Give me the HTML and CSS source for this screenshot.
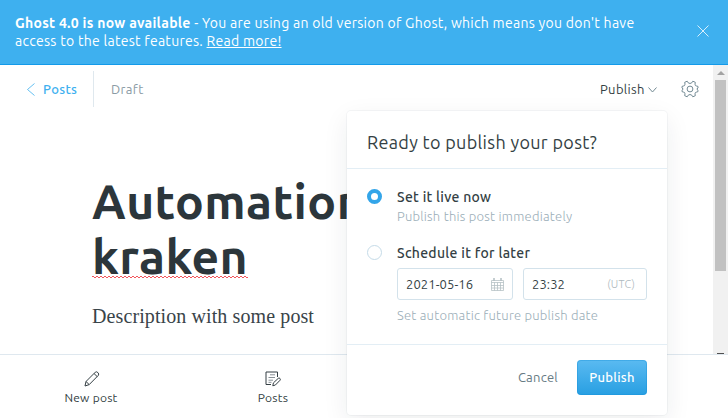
FILE: index.html
```html
<!DOCTYPE html>
<html lang="en">
<head>
<meta charset="utf-8">
<title>Ghost editor</title>
<link rel="stylesheet" href="styles.css">
</head>
<body>
<aside class="alert">
  <p class="alert-text"><strong>Ghost 4.0 is now available</strong> - You are using an old version of Ghost, which means you don't have<br>access to the latest features. <a>Read more!</a></p>
  <svg class="alert-close" viewBox="0 0 12 12"><path d="M.5.5l11 11M11.5.5l-11 11"/></svg>
</aside>
<main class="viewport">
  <section class="editor">
    <header class="toolbar">
      <a class="back"><svg class="chevron-left" viewBox="0 0 8 13"><path d="M7.5.5l-7 6 7 6"/></svg><span>Posts</span></a>
      <span class="status">Draft</span>
      <div class="publish-menu"><span>Publish</span><svg class="chevron-down" viewBox="0 0 9 6"><path d="M.5.5l4 4.5 4-4.5"/></svg></div>
      <svg class="gear" viewBox="0 0 18 18"><path d="M6.2 1.2L7.2 2.8Q9 4.2 10.8 2.8L11.8 1.2L14.3 2.3L14 4.2Q14 6 15.8 6.1L17 6.4V8Q14.6 9 17 10.2V11.6L15.8 12Q14 12.1 14 13.8L14.3 15.7L11.8 16.8L10.8 15.2Q9 13.8 7.2 15.2L6.2 16.8L3.7 15.7L4 13.8Q4 12.1 2.2 12L1 11.6V10.2Q3.4 9 1 8V6.4L2.2 6.1Q4 6 4 4.2L3.7 2.3Z"/><circle cx="9" cy="9" r="2.9"/></svg>
    </header>
    <article class="post">
      <h1>Automation<br><span class="misspelled">kraken</span></h1>
      <p class="description">Description with some post</p>
    </article>
  </section>
  <div class="scrollbar"><i class="scroll-up"></i><i class="scroll-thumb"></i><i class="scroll-mark"></i></div>
</main>
<nav class="bottom-nav">
  <a class="nav-item"><svg class="pencil" viewBox="0 0 16 16"><path d="M1 15l1-4.5L11.3 1.2q1.2-1 2.6.4t.5 2.7L5.2 13.6zM2 10.5l3.2 3.1M10 2.5l3.2 3.1"/></svg><span>New post</span></a>
  <a class="nav-item"><svg viewBox="0 0 16 16"><path d="M6 13.5H1V1h11.5v5"/><path class="faint" d="M5 3.8h5M3.5 6.5h6.5M3.5 9.2h4.5M3.5 11.3h3"/><path d="M7.8 14.8l.6-2.9 4.9-4.6q1-.6 1.7.2t.1 1.7l-4.7 4.8z"/></svg><span>Posts</span></a>
</nav>
<div class="popover">
  <header class="popover-head"><h2>Ready to publish your post?</h2></header>
  <div class="options">
    <div class="option">
      <i class="radio checked"></i>
      <div><div class="option-title">Set it live now</div><div class="hint">Publish this post immediately</div></div>
    </div>
    <div class="option later">
      <i class="radio"></i>
      <div>
        <div class="option-title">Schedule it for later</div>
        <div class="fields">
          <div class="field date"><span>2021-05-16</span><svg class="calendar" viewBox="0 0 13 13"><path d="M.5 2.5h12v10H.5zM.5 4.5h12M.5 7.5h12M.5 10h12M3.5 4.5v8M6.5 4.5v8M9.5 4.5v8M2.5 0v3M3.5 0v3M9.5 0v3M10.5 0v3"/></svg></div>
          <div class="field time"><span>23:32</span><span class="zone">(UTC)</span></div>
        </div>
        <div class="hint future">Set automatic future publish date</div>
      </div>
    </div>
  </div>
  <footer class="popover-foot"><a class="cancel">Cancel</a><button class="publish">Publish</button></footer>
</div>
</body>
</html>
```
FILE: styles.css
```css
* { box-sizing: border-box; }
body { margin: 0; width: 728px; height: 418px; overflow: hidden; position: relative; display: flex; flex-direction: column; background: #fff; color: #343f44; font-family: Ubuntu, "Noto Sans", sans-serif; font-size: 13px; letter-spacing: .24px; white-space: nowrap; }
svg { fill: none; stroke: currentColor; flex: none; }
h1, h2, p { margin: 0; }
.alert { height: 65px; flex: none; display: flex; justify-content: space-between; align-items: flex-start; padding: 14px 19px 0 15px; background: #3eb0ef; border-bottom: 1px solid #139ae9; color: #fff; }
.alert-text { font-size: 14px; line-height: 18px; letter-spacing: .28px; }
.alert-close { width: 12px; height: 12px; margin-top: 11px; stroke-width: .8; }
.alert a { text-decoration: underline; }
.viewport { height: 289px; flex: none; display: flex; }
.editor { flex: 1; }
.toolbar { display: flex; align-items: center; height: 36px; margin-top: 6px; padding: 0 14px 0 27px; line-height: 36px; letter-spacing: .35px; }
.back { display: flex; align-items: center; height: 36px; width: 67px; border-right: 1px solid #dfe8ee; color: #3eb0ef; font-weight: 500; }
.chevron-left { width: 8px; height: 13px; margin-right: 8px; stroke-width: .8; }
.status { margin-left: 17px; color: #8b9ba5; }
.publish-menu { margin-left: auto; width: 57px; display: flex; align-items: center; justify-content: space-between; }
.chevron-down { width: 9px; height: 6px; margin-top: 2px; stroke: #738a94; }
.gear { width: 18px; height: 18px; margin-left: 24px; stroke: #738a94; }
.post { padding: 67px 0 0 92px; }
h1 { font-size: 48px; line-height: 55px; font-weight: 700; letter-spacing: .4px; color: #2c363b; }
.misspelled {
  background-image: linear-gradient(90deg, #f2555b 2px, transparent 2px), linear-gradient(90deg, #f2555b 2px, transparent 2px);
  background-size: 4px 1px;
  background-position: 0 calc(100% - 6px), 2px calc(100% - 5px);
  background-repeat: repeat-x;
}
.description { margin-top: 18px; font: 20px/28px "Liberation Serif", serif; letter-spacing: .1px; color: #394449; }
.scrollbar { width: 15px; background: #f1f1f1; display: flex; flex-direction: column; align-items: center; }
.scroll-up { border: 4px solid transparent; border-top: 0; border-bottom: 4px solid #a3a3a3; margin-top: 6px; }
.scroll-thumb { width: 11px; height: 191px; margin-top: 5px; background: #c1c1c1; }
.scroll-mark { width: 7px; height: 1px; margin-top: auto; background: #505050; }
.bottom-nav { height: 64px; border-top: 1px solid #dfe8ef; display: grid; grid-template-columns: repeat(4, 182px); }
.nav-item { display: flex; flex-direction: column; align-items: center; padding-top: 16px; font-size: 12px; line-height: 18px; }
.nav-item svg { width: 16px; height: 16px; margin-bottom: 2px; }
.nav-item .pencil { margin-left: 1px; }
.faint { stroke: #899197; }
.popover { position: absolute; left: 347px; top: 111px; width: 320px; height: 304px; background: #fff; border-radius: 4px; box-shadow: 0 0 0 1px rgba(99,114,130,.06), 0 8px 26px rgba(27,39,51,.08); }
.popover-head { height: 58px; padding: 18px 20px 0; border-bottom: 1px solid #e3eef5; }
h2 { font-size: 18px; line-height: 26px; font-weight: 400; letter-spacing: .32px; }
.options { height: 176px; padding: 18px 20px 0; border-bottom: 1px solid #e3eef5; }
.option { display: flex; }
.later { margin-top: 17px; }
.radio { width: 15px; height: 15px; flex: none; margin: 2px 15px 0 0; border: 1px solid #c5dbe8; border-radius: 50%; }
.checked { border: 4px solid #33a5e9; }
.option-title { font-size: 14px; line-height: 19px; font-weight: 500; padding-top: 1px; letter-spacing: .29px; }
.option-title + .hint { margin-top: -1px; }
.hint { color: #9baeb8; line-height: 20px; font-weight: 300; }
.fields { display: flex; gap: 10px; margin-top: 5px; }
.field { display: flex; align-items: center; justify-content: space-between; height: 32px; border: 1px solid #d3e2eb; border-radius: 3px; padding: 0 8px; letter-spacing: .1px; }
.date { width: 116px; }
.time { width: 124px; padding-right: 11px; }
.calendar { width: 13px; height: 13px; stroke: #b2bdc1; stroke-width: .75; }
.zone { color: #aeb9be; font-size: 11px; font-weight: 300; letter-spacing: .2px; }
.future { margin-top: 5px; }
.popover-foot { display: flex; justify-content: flex-end; align-items: center; gap: 19px; padding: 15px 20px 0; }
.cancel { color: #667a83; margin-top: -1px; }
.publish { width: 70px; height: 35px; padding: 0 0 2px; border: 0; border-radius: 4px; background: linear-gradient(#5abaf1, #289fe2); box-shadow: inset 0 0 0 1px rgba(20,142,215,.35); color: #fff; font: 500 13px Ubuntu, "Noto Sans", sans-serif; letter-spacing: .26px; }
```
